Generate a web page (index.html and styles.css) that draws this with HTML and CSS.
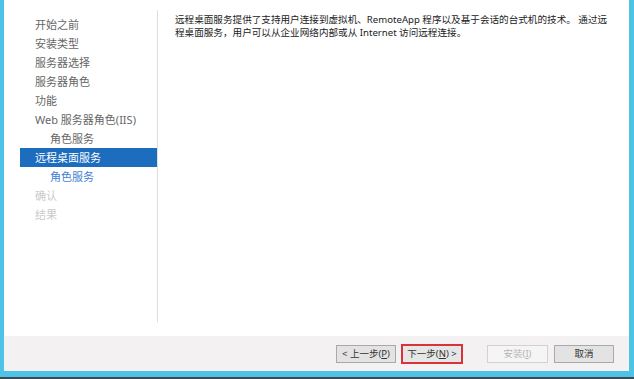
FILE: index.html
```html
<!DOCTYPE html>
<html lang="zh-CN">
<head>
<meta charset="utf-8">
<title>添加角色和功能向导</title>
<link rel="stylesheet" href="styles.css">
</head>
<body>
<div class="window">
  <div class="frame">
    <div class="main">
      <nav class="nav">
        <ul class="steps">
          <li class="step">开始之前</li>
          <li class="step">安装类型</li>
          <li class="step">服务器选择</li>
          <li class="step">服务器角色</li>
          <li class="step">功能</li>
          <li class="step">Web 服务器角色(IIS)</li>
          <li class="step sub">角色服务</li>
          <li class="step active">远程桌面服务</li>
          <li class="step sub link">角色服务</li>
          <li class="step disabled">确认</li>
          <li class="step disabled">结果</li>
        </ul>
      </nav>
      <div class="sep"></div>
      <div class="content">
        <p class="desc">远程桌面服务提供了支持用户连接到虚拟机、RemoteApp 程序以及基于会话的台式机的技术。 通过远<br>程桌面服务，用户可以从企业网络内部或从 Internet 访问远程连接。</p>
      </div>
    </div>
    <div class="footer">
      <button class="btn">&lt; 上一步(<u>P</u>)</button>
      <button class="btn focus">下一步(<u>N</u>) &gt;</button>
      <button class="btn disabled-btn">安装(<u>I</u>)</button>
      <button class="btn">取消</button>
    </div>
  </div>
  <div class="shadow"></div>
</div>
</body>
</html>
```

FILE: styles.css
```css
* { box-sizing: border-box; }
html, body {
  margin: 0;
  padding: 0;
  width: 634px;
  height: 379px;
  overflow: hidden;
  background: #ffffff;
  font-family: "Noto Sans", "Noto Sans CJK SC", sans-serif;
}
.window {
  width: 634px;
  height: 379px;
  display: flex;
  flex-direction: column;
}
.frame {
  flex: 1;
  display: flex;
  flex-direction: column;
  border-left: 4px solid #4fc3e7;
  border-right: 5px solid #4fc3e7;
  border-bottom: 6px solid #4fc3e7;
  background: #ffffff;
}
.shadow {
  height: 2px;
  background: #3d4a52;
}
.main {
  height: 336px;
  display: flex;
}
.nav {
  width: 153px;
  padding: 15px 0 0 16px;
}
.steps {
  list-style: none;
  margin: 0;
  padding: 0;
}
.step {
  height: 19px;
  line-height: 19px;
  padding-left: 15px;
  font-size: 11px;
  color: #666666;
  white-space: nowrap;
}
.step.sub { padding-left: 30px; }
.step.active {
  background: #1c6dbe;
  color: #ffffff;
}
.step.link { color: #3f80d4; }
.step.disabled { color: #cbcbcb; }
.sep {
  width: 1px;
  margin: 10px 0 14px;
  background: #dedede;
}
.content {
  flex: 1;
  padding: 13px 10px 0 17px;
}
.desc {
  margin: 0;
  font-size: 9.6px;
  line-height: 13px;
  color: #222222;
  white-space: nowrap;
}
.footer {
  height: 35px;
  background: #f4f1f3;
  display: flex;
  align-items: flex-start;
  padding: 9px 15px 0 0;
  justify-content: flex-end;
}
.btn {
  width: 60px;
  height: 18px;
  padding: 0;
  margin: 0;
  font-family: "Noto Sans", "Noto Sans CJK SC", sans-serif;
  font-size: 9.5px;
  line-height: 16px;
  color: #333333;
  background: #e3e3e3;
  border: 1px solid #a9a9a9;
  border-radius: 0;
}
.btn u { text-decoration: underline; }
.btn + .btn { margin-left: 5px; }
.btn.focus {
  width: 62px;
  height: 20px;
  margin-top: -1px;
  border: 2px solid #d8323a;
  background: #e6e6e6;
}
.btn.disabled-btn {
  margin-left: 24px;
  width: 61px;
  background: #f5f5f5;
  border-color: #d2d2d2;
  color: #b4b4b4;
}
.btn.disabled-btn + .btn { margin-left: 6px; }
```
